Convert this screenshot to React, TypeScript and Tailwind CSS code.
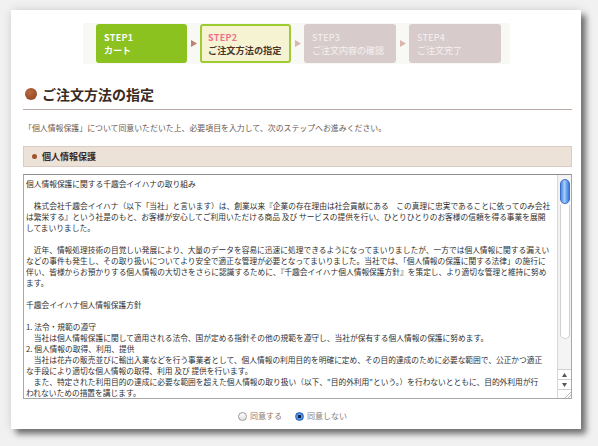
import React from "react";

const jp = { fontFamily: '"Noto Sans CJK JP", "Noto Sans", sans-serif' };

const lines: string[] = [
  "個人情報保護に関する千趣会イイハナの取り組み",
  "",
  "　株式会社千趣会イイハナ（以下「当社」と言います）は、創業以来『企業の存在理由は社会貢献にある　この真理に忠実であることに依ってのみ会社",
  "は繁栄する』という社是のもと、お客様が安心してご利用いただける商品 及び サービスの提供を行い、ひとりひとりのお客様の信頼を得る事業を展開",
  "してまいりました。",
  "",
  "　近年、情報処理技術の目覚しい発展により、大量のデータを容易に迅速に処理できるようになってまいりましたが、一方では個人情報に関する漏えい",
  "などの事件も発生し、その取り扱いについてより安全で適正な管理が必要となってまいりました。当社では、「個人情報の保護に関する法律」の施行に",
  "伴い、皆様からお預かりする個人情報の大切さをさらに認識するために、『千趣会イイハナ個人情報保護方針』を策定し、より適切な管理と維持に努め",
  "ます。",
  "",
  "千趣会イイハナ個人情報保護方針",
  "",
  "1. 法令・規範の遵守",
  "　当社は個人情報保護に関して適用される法令、国が定める指針その他の規範を遵守し、当社が保有する個人情報の保護に努めます。",
  "2. 個人情報の取得、利用、提供",
  "　当社は花卉の販売並びに輸出入業などを行う事業者として、個人情報の利用目的を明確に定め、その目的達成のために必要な範囲で、公正かつ適正",
  "な手段により適切な個人情報の取得、利用 及び 提供を行います。",
  "　また、特定された利用目的の達成に必要な範囲を超えた個人情報の取り扱い（以下、\"目的外利用\"という。）を行わないとともに、目的外利用が行",
  "われないための措置を講じます。",
];

function Arrow({ color }: { color: string }) {
  return (
    <div className="w-[13px] flex items-center justify-center">
      <svg width="6" height="7" viewBox="0 0 6 7">
        <polygon points="0,0 6,3.5 0,7" fill={color} />
      </svg>
    </div>
  );
}

export default function App() {
  return (
    <div
      className="w-[598px] h-[446px] bg-[#f1f1f1] pl-[11px] pt-[10px] overflow-hidden"
      style={jp}
    >
      <div className="w-[570px] h-[419px] bg-white shadow-[5px_5px_6px_rgba(0,0,0,0.5),0_0_10px_rgba(0,0,0,0.12)] flex flex-col">
        {/* steps */}
        <div className="ml-[72px] mt-[13px] w-[427px] h-[41px] bg-[#f8f8f5] flex items-center pl-[13px]">
          <div className="w-[91px] h-[39px] rounded-[3px] bg-[#8cc21f] flex flex-col justify-center pl-[8px] text-white font-bold text-[9px] leading-[13px]">
            <div className="tracking-[0.3px]">STEP1</div>
            <div>カート</div>
          </div>
          <Arrow color="#b98273" />
          <div className="w-[91px] h-[39px] rounded-[3px] bg-[#f6f3d3] border-2 border-[#9dcb32] flex flex-col justify-center pl-[6px] font-bold text-[9px] leading-[13px]">
            <div className="text-[#ef6f8e] tracking-[0.3px]">STEP2</div>
            <div className="text-[#4a3628] text-[9.2px]">ご注文方法の指定</div>
          </div>
          <Arrow color="#d9b5aa" />
          <div className="w-[92px] h-[39px] rounded-[3px] bg-[#d7cccb] flex flex-col justify-center pl-[8px] text-[#f6f1f1] text-[9px] leading-[13px]">
            <div className="tracking-[0.3px]">STEP3</div>
            <div>ご注文内容の確認</div>
          </div>
          <Arrow color="#dab7ad" />
          <div className="w-[92px] h-[39px] rounded-[3px] bg-[#d7cccb] flex flex-col justify-center pl-[8px] text-[#f6f1f1] text-[9px] leading-[13px]">
            <div className="tracking-[0.3px]">STEP4</div>
            <div>ご注文完了</div>
          </div>
        </div>

        <div className="ml-[12px] w-[549px] flex flex-col">
          {/* heading */}
          <div className="mt-[22px] flex items-center h-[16px] pl-[2px]">
            <div className="w-[12px] h-[12px] rounded-full bg-[radial-gradient(circle_at_40%_35%,#b8693f,#8a3f1e)]" />
            <div className="ml-[5px] text-[14px] font-bold text-[#3b2a1f] leading-[16px]">
              ご注文方法の指定
            </div>
          </div>
          <div className="mt-[7px] h-px bg-[#b9a8a3]" />

          <div className="mt-[13px] text-[7.9px] leading-[10px] text-[#6b5b52] pl-[1px]">
            「個人情報保護」について同意いただいた上、必要項目を入力して、次のステップへお進みください。
          </div>

          {/* section bar */}
          <div className="mt-[13px] h-[21px] bg-[#ede2d8] border border-[#dccbc0] flex items-center pl-[8px]">
            <div className="w-[5px] h-[5px] rounded-full bg-[#a0522d]" />
            <div className="ml-[5px] text-[9px] font-bold text-[#3b2a1f]">個人情報保護</div>
          </div>

          {/* textarea */}
          <div className="mt-[7px] h-[225px] border border-[#a8a8a8] border-t-[#8e8e8e] flex">
            <div className="flex-1 pl-[2px] pt-[3px] overflow-hidden text-[7.72px] leading-[11px] text-[#2f2f2f]">
              {lines.map((l, i) => (
                <div key={i} className="whitespace-pre h-[11px]">
                  {l}
                </div>
              ))}
            </div>
            <div className="w-[14px] border-l border-[#d8d8d8] bg-[#f4f4f4] flex flex-col items-center">
              <div className="mt-[4px] w-[10px] h-[25px] rounded-full border border-[#3a6fc9] bg-[linear-gradient(90deg,#4d8ae6,#a8cdfb_45%,#6aa3f0_70%,#3b78d6)]" />
              <div className="flex-1 w-[10px] mt-[1px] rounded-b-full border border-t-0 border-[#d0d0d0] bg-white mb-[30px]" />
              <div className="w-full border-t border-[#d0d0d0] h-[10px] flex items-center justify-center bg-white">
                <svg width="5" height="4" viewBox="0 0 5 4">
                  <polygon points="2.5,0 5,4 0,4" fill="#555" />
                </svg>
              </div>
              <div className="w-full border-t border-[#d0d0d0] h-[10px] flex items-center justify-center bg-white">
                <svg width="5" height="4" viewBox="0 0 5 4">
                  <polygon points="0,0 5,0 2.5,4" fill="#555" />
                </svg>
              </div>
              <div className="w-full border-t border-[#d0d0d0] h-[9px] bg-white flex items-end justify-end">
                <svg width="7" height="7" viewBox="0 0 7 7">
                  <line x1="1" y1="7" x2="7" y2="1" stroke="#aaa" strokeWidth="0.8" />
                  <line x1="4" y1="7" x2="7" y2="4" stroke="#aaa" strokeWidth="0.8" />
                </svg>
              </div>
            </div>
          </div>

          {/* radios */}
          <div className="mt-[11px] flex items-center justify-center gap-[13px] text-[8px] text-[#8a7b74] pr-[10px]">
            <label className="flex items-center gap-[3px]">
              <span className="w-[9px] h-[9px] rounded-full border border-[#9a9a9a] bg-[linear-gradient(#fdfdfd,#e2e2e2)]" />
              <span>同意する</span>
            </label>
            <label className="flex items-center gap-[3px]">
              <span className="w-[9px] h-[9px] rounded-full border border-[#2d64b8] bg-[radial-gradient(circle,#0d1f44_0,#0d1f44_28%,#5e9cf0_34%,#2f6fd0_100%)]" />
              <span>同意しない</span>
            </label>
          </div>
        </div>
      </div>
    </div>
  );
}
